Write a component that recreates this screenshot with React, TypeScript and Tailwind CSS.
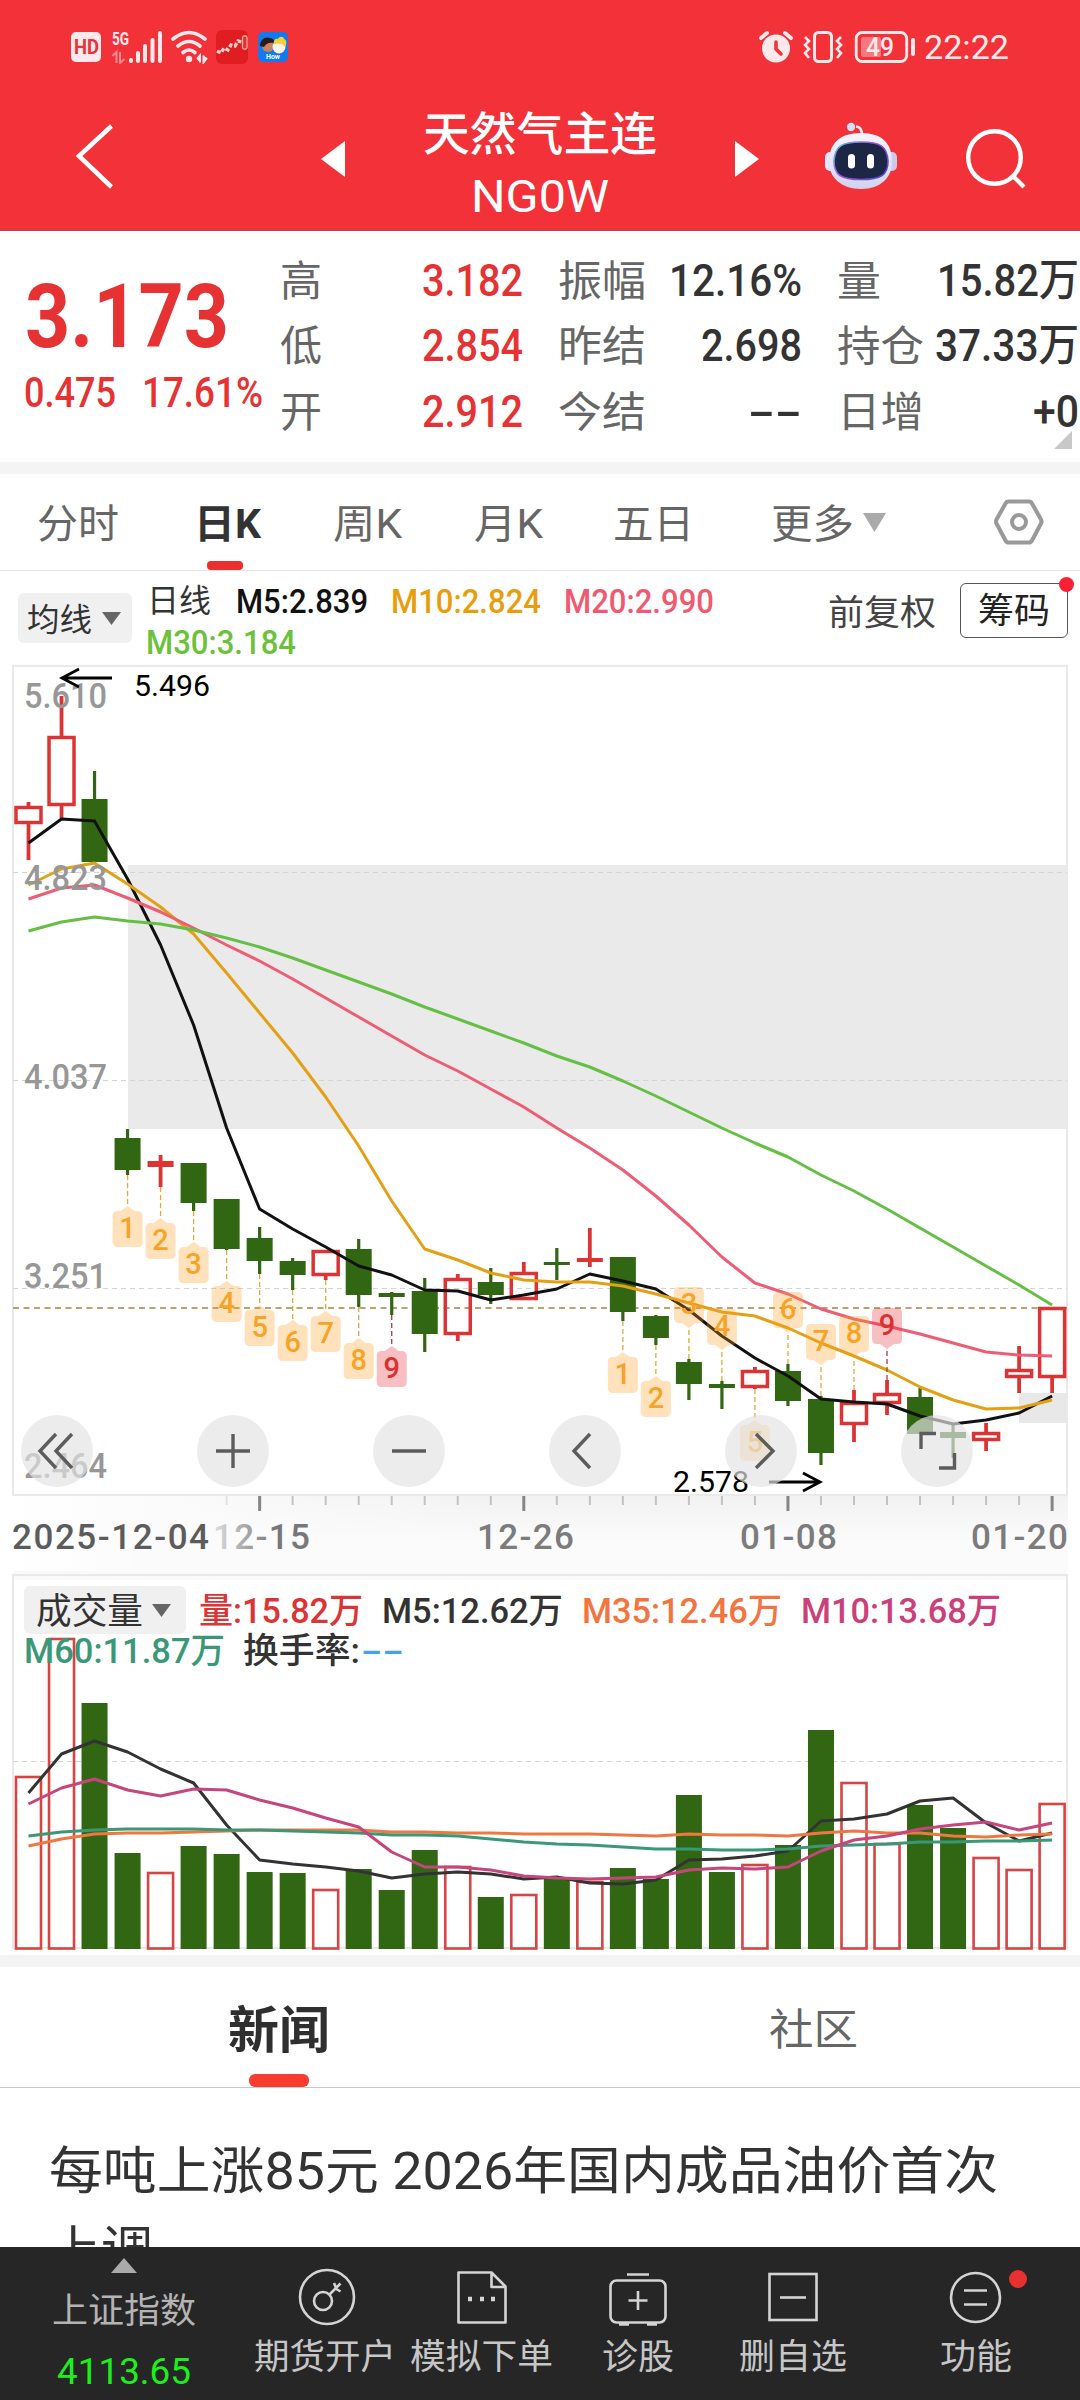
import { useLayoutEffect, useRef, type ReactNode } from 'react';

/* Text stretched horizontally so that it fills the width of its box. */
function Fit({ box, children }: { box: string; children: ReactNode }) {
  const outer = useRef<HTMLSpanElement>(null);
  const inner = useRef<HTMLSpanElement>(null);
  useLayoutEffect(() => {
    const o = outer.current;
    const i = inner.current;
    if (o && i && i.offsetWidth > 0) {
      i.style.transform = `scaleX(${o.clientWidth / i.getBoundingClientRect().width})`;
    }
  }, []);
  return (
    <span ref={outer} className={`block flex-none whitespace-nowrap ${box}`}>
      <span ref={inner} className="inline-block origin-left">
        {children}
      </span>
    </span>
  );
}

const X0 = 28.5;
const STEP = 33.02;
const cx = (i: number) => X0 + i * STEP;
const line = (ys: number[]) => ys.map((y, i) => `${cx(i).toFixed(1)},${y}`).join(' ');

const GREEN = '#316713';
const RED = '#dc3434';

type Candle = ['r' | 'g', number, number, number, number];

/* direction, high, body top, body bottom, low */
const candles: Candle[] = [
  ['r', 802, 806, 824, 860],
  ['r', 696, 736, 806, 818],
  ['g', 771, 799, 862, 862],
  ['g', 1129, 1138, 1170, 1175],
  ['r', 1155, 1161, 1167, 1187],
  ['g', 1163, 1163, 1203, 1211],
  ['g', 1199, 1199, 1249, 1250],
  ['g', 1227, 1238, 1261, 1274],
  ['g', 1258, 1261, 1275, 1290],
  ['r', 1250, 1250, 1276, 1280],
  ['g', 1239, 1249, 1295, 1307],
  ['g', 1292, 1293, 1297, 1315],
  ['g', 1278, 1291, 1334, 1352],
  ['r', 1274, 1278, 1335, 1341],
  ['g', 1268, 1282, 1295, 1304],
  ['r', 1262, 1272, 1300, 1300],
  ['g', 1248, 1262, 1265, 1280],
  ['r', 1228, 1258, 1262, 1267],
  ['g', 1257, 1257, 1312, 1321],
  ['g', 1315, 1316, 1338, 1345],
  ['g', 1359, 1362, 1384, 1400],
  ['g', 1381, 1384, 1388, 1409],
  ['r', 1367, 1370, 1388, 1389],
  ['g', 1364, 1371, 1401, 1406],
  ['g', 1396, 1399, 1453, 1465],
  ['r', 1390, 1402, 1425, 1442],
  ['r', 1380, 1393, 1404, 1415],
  ['g', 1388, 1397, 1434, 1434],
  ['g', 1424, 1432, 1438, 1458],
  ['r', 1423, 1432, 1441, 1451],
  ['r', 1346, 1369, 1378, 1393],
  ['r', 1307, 1307, 1378, 1393],
];

const ma5 = [843, 819, 821, 879, 945, 1025, 1128, 1209, 1229, 1247, 1266, 1275, 1290, 1291, 1300, 1295, 1289, 1274, 1281, 1289, 1310, 1336, 1358, 1376, 1399, 1402, 1404, 1416, 1424, 1420, 1413, 1396];
const ma10 = [885, 869, 863, 884, 907, 934, 973, 1013, 1053, 1097, 1146, 1201, 1249, 1260, 1273, 1280, 1282, 1282, 1286, 1294, 1303, 1312, 1316, 1328, 1343, 1356, 1370, 1387, 1400, 1409, 1408, 1400];
const ma20 = [899, 888, 885, 898, 912, 928, 945, 961, 979, 998, 1017, 1036, 1055, 1071, 1089, 1107, 1128, 1148, 1170, 1196, 1225, 1257, 1283, 1294, 1309, 1319, 1326, 1334, 1343, 1352, 1355, 1356];
const ma30 = [931, 922, 917, 921, 924, 930, 938, 947, 958, 970, 982, 994, 1007, 1019, 1031, 1043, 1056, 1067, 1081, 1096, 1112, 1128, 1143, 1157, 1175, 1191, 1209, 1228, 1247, 1266, 1285, 1305];

/* candle index, count, y of the pointer's tip, placed under the candle */
const marks: [number, number, number, boolean][] = [
  [3, 1, 1206, true],
  [4, 2, 1218, true],
  [5, 3, 1242, true],
  [6, 4, 1281, true],
  [7, 5, 1305, true],
  [8, 6, 1320, true],
  [9, 7, 1311, true],
  [10, 8, 1338, true],
  [11, 9, 1346, true],
  [18, 1, 1352, true],
  [19, 2, 1376, true],
  [20, 3, 1328, false],
  [21, 4, 1350, false],
  [22, 5, 1420, true],
  [23, 6, 1333, false],
  [24, 7, 1365, false],
  [25, 8, 1357, false],
  [26, 9, 1349, false],
];

const volTops = [1777, 1639, 1703, 1853, 1873, 1846, 1854, 1872, 1873, 1890, 1869, 1890, 1850, 1867, 1897, 1895, 1879, 1882, 1868, 1879, 1795, 1872, 1865, 1845, 1730, 1783, 1844, 1805, 1828, 1858, 1870, 1804];
const v5 = [1793, 1754, 1741, 1752, 1769, 1783, 1825, 1860, 1864, 1867, 1871, 1878, 1874, 1872, 1874, 1879, 1877, 1883, 1884, 1880, 1860, 1859, 1856, 1851, 1821, 1819, 1814, 1801, 1798, 1823, 1841, 1833];
const v10 = [1804, 1788, 1779, 1790, 1796, 1789, 1790, 1800, 1808, 1818, 1827, 1852, 1867, 1867, 1870, 1876, 1878, 1879, 1878, 1877, 1870, 1868, 1869, 1867, 1851, 1840, 1836, 1829, 1825, 1822, 1830, 1823];
const v35 = [1846, 1839, 1834, 1833, 1833, 1832, 1831, 1830, 1830, 1830, 1830, 1832, 1832, 1833, 1833, 1834, 1834, 1834, 1835, 1836, 1834, 1835, 1835, 1836, 1833, 1831, 1833, 1833, 1836, 1837, 1835, 1834];
const v60 = [1836, 1832, 1830, 1829, 1829, 1829, 1830, 1830, 1831, 1832, 1833, 1835, 1835, 1836, 1839, 1842, 1844, 1845, 1847, 1849, 1849, 1850, 1850, 1849, 1846, 1845, 1844, 1842, 1842, 1841, 1841, 1840];

function StatusBar() {
  return (
    <div className="flex h-[94px] items-center text-[#ffe9ea]">
      <div className="ml-[71px] flex h-[30px] w-[30px] items-center justify-center rounded-[5px] bg-[#ffe9ea]">
        <Fit box="w-[25px] text-[20px] font-bold leading-[28px] text-[#e8333b]">HD</Fit>
      </div>
      <svg className="ml-[10px]" width="52" height="34" viewBox="111 29 52 34">
        <text x="112" y="44" fontSize="19" fontWeight="700" textLength="17" lengthAdjust="spacingAndGlyphs" fill="#ffe9ea">5G</text>
        <path d="M112.500 55l4-4v11M120 51v11l4.500-4" stroke="#f68a8f" strokeWidth="2" fill="none" />
        <path d="M131 59v1M138 52v8M145 45v15M152.500 39v21M160 32v28" stroke="#ffe9ea" strokeWidth="4" strokeLinecap="round" />
      </svg>
      <svg className="ml-[7px]" width="40" height="34" viewBox="170 29 40 34">
        <g fill="none" stroke="#ffe9ea" strokeWidth="3.600" strokeLinecap="round">
          <path d="M173 38q16-13 32 0" />
          <path d="M178 45q11-9 22 0" />
          <path d="M183 51.500q6-5 12 0" />
        </g>
        <circle cx="189" cy="58" r="3.200" fill="#ffe9ea" />
        <path d="M197 58l3-3.500v7M203.500 54.500v7l3.500-4.500" stroke="#ffe9ea" strokeWidth="2" fill="#ffe9ea" />
      </svg>
      <svg className="ml-[5px]" width="34" height="34" viewBox="0 0 34 34">
        <rect x="1" y="0" width="32" height="34" rx="6" fill="#e01d20" />
        <path d="M2 21l4 2 3-5 4 2 3-5 4 1 3-5 4 1" fill="none" stroke="#f7d0cc" strokeWidth="3.400" strokeDasharray="4 2" />
        <rect x="27.500" y="6" width="4.500" height="13" rx="1.500" fill="#d33" stroke="#f3a79c" strokeWidth="1.300" />
      </svg>
      <svg className="ml-[9px]" width="30" height="30" viewBox="0 0 30 30">
        <rect width="30" height="30" rx="5" fill="#1279ee" />
        <circle cx="10" cy="14" r="6" fill="#c98462" />
        <path d="M2 14c0-7 6-10 10-8 3 0 5 3 4 5-4-1-8 0-10 4z" fill="#2a1a1c" />
        <circle cx="21" cy="15" r="6.500" fill="#fdf3e6" />
        <path d="M16 12c-1-4 2-6 4-5 1-3 6-3 6 0 3 1 3 5 1 8-2-4-6-4-11-3z" fill="#f4cf3c" />
        <text x="8" y="27" fontSize="7" fontWeight="700" fill="#fff" textLength="14">How</text>
      </svg>
      <svg className="ml-[471px]" width="34" height="34" viewBox="759 29 34 34">
        <circle cx="776" cy="47.500" r="14" fill="#ffe9ea" />
        <path d="M761 37l6-5M791 37l-6-5" stroke="#ffe9ea" strokeWidth="4" strokeLinecap="round" />
        <path d="M776 41v7l5 5" stroke="#f03239" strokeWidth="3.500" strokeLinecap="round" fill="none" />
      </svg>
      <svg className="ml-[9px]" width="42" height="34" viewBox="802 29 42 34">
        <g fill="none" stroke="#ffe9ea" strokeWidth="3">
          <rect x="814.500" y="31.500" width="17" height="29" rx="4" />
          <path d="M805 36l4 4-4 4 4 4-4 4 4 5" strokeWidth="2.600" />
          <path d="M841 36l-4 4 4 4-4 4 4 4-4 5" strokeWidth="2.600" />
        </g>
      </svg>
      <svg className="ml-[10px]" width="62" height="34" viewBox="854 29 62 34">
        <rect x="856.200" y="31.500" width="50.500" height="29" rx="6" fill="none" stroke="#ffe9ea" strokeWidth="2.800" />
        <rect x="861" y="36" width="20" height="20" rx="2" fill="#f7797f" />
        <path d="M913 39v14" stroke="#ffe9ea" strokeWidth="4" strokeLinecap="round" />
        <text x="866" y="54.500" fontSize="25" fontWeight="500" fill="#ffe9ea" textLength="28" lengthAdjust="spacingAndGlyphs">49</text>
      </svg>
      <Fit box="ml-[8px] w-[85px] text-[34px] leading-[40px]">22:22</Fit>
    </div>
  );
}

function NavBar() {
  return (
    <div className="flex h-[137px] items-start border-b border-[#b34a50]">
      <svg className="ml-[72px] mt-[26px]" width="44" height="72" viewBox="72 120 44 72">
        <path d="M111.500 126L79 156l32.500 31" fill="none" stroke="#fff" strokeWidth="4.500" />
      </svg>
      <svg className="ml-[205px] mt-[47px]" width="24" height="36" viewBox="0 0 24 36">
        <path d="M24 0v36L0 18z" fill="#fff" />
      </svg>
      <div className="ml-[78px] flex w-[234px] flex-col items-center">
        <Fit box="mt-[10px] w-[234px] text-[46px] font-medium leading-[60px]">天然气主连</Fit>
        <Fit box="mt-[3px] w-[138px] text-[44px] leading-[60px]">NG0W</Fit>
      </div>
      <svg className="ml-[78px] mt-[47px]" width="24" height="36" viewBox="0 0 24 36">
        <path d="M0 0v36l24-18z" fill="#fff" />
      </svg>
      <svg className="ml-[64px] mt-[26px]" width="76" height="72" viewBox="823 120 76 72">
        <defs>
          <linearGradient id="shell" x1="0" y1="0" x2="0" y2="1">
            <stop offset="0" stopColor="#f6f5fd" />
            <stop offset="0.600" stopColor="#e3e3f8" />
            <stop offset="1" stopColor="#d0d2ee" />
          </linearGradient>
          <linearGradient id="rim" x1="0" y1="0" x2="1" y2="0.700">
            <stop offset="0" stopColor="#56c5ea" />
            <stop offset="0.500" stopColor="#a54fe0" />
            <stop offset="1" stopColor="#5a48c9" />
          </linearGradient>
        </defs>
        <path d="M862 135q0-8-6-8.500" fill="none" stroke="#ecebfa" strokeWidth="2.600" />
        <circle cx="851" cy="127" r="4.200" fill="#dcdcf4" />
        <rect x="825" y="152" width="12" height="19" rx="5" fill="#e5e5f9" />
        <rect x="885" y="152" width="12" height="19" rx="5" fill="#c9cbea" />
        <path d="M861 133c22 0 31 11 31 29 0 15-11 27-31 27s-32-12-32-27c0-18 10-29 32-29z" fill="url(#shell)" />
        <path d="M861 142c19 0 26 4 27 19 0 14-7 18.500-27 18.500S834 175 834 161c1-15 8-19 27-19z" fill="#1b2744" stroke="url(#rim)" strokeWidth="1.600" />
        <rect x="848" y="154" width="7" height="14.500" rx="3.500" fill="#fff" />
        <rect x="867" y="154" width="7" height="14.500" rx="3.500" fill="#fff" />
      </svg>
      <svg className="ml-[65px] mt-[30px]" width="64" height="66" viewBox="964 124 64 66">
        <circle cx="994.500" cy="157.500" r="26.300" fill="none" stroke="#fff" strokeWidth="4.400" />
        <path d="M1012.500 175.500l11.500 11.500" stroke="#fff" strokeWidth="4.400" />
      </svg>
    </div>
  );
}

function Label({ w, children }: { w: string; children: string }) {
  return <Fit box={`${w} ml-[-1px] mt-[2px] text-[42px] leading-[64px] text-[#666]`}>{children}</Fit>;
}

function Value({ w, children }: { w: string; children: string }) {
  return <Fit box={`${w} text-[44px] font-medium leading-[64px]`}>{children}</Fit>;
}

function Quote() {
  const row = 'flex h-[65.500px] items-center justify-between';
  return (
    <section className="relative flex h-[231px] overflow-hidden bg-white pt-[17px]">
      <div className="w-[281px] flex-none text-[#e63232]">
        <Fit box="ml-[25px] mt-[17px] w-[204px] text-[89px] font-bold leading-[104px]">3.173</Fit>
        <div className="flex">
          <Fit box="ml-[24px] mt-[-1px] w-[92px] text-[42px] font-medium leading-[50px]">0.475</Fit>
          <Fit box="ml-[26px] mt-[-1px] w-[121px] text-[42px] font-medium leading-[50px]">17.61%</Fit>
        </div>
      </div>
      <div className="w-[242px] flex-none text-[#e63232]">
        <div className={row}><Label w="w-[42px]">高</Label><Value w="w-[101px]">3.182</Value></div>
        <div className={row}><Label w="w-[42px]">低</Label><Value w="w-[101px]">2.854</Value></div>
        <div className={row}><Label w="w-[42px]">开</Label><Value w="w-[101px]">2.912</Value></div>
      </div>
      <div className="ml-[36px] w-[243px] flex-none text-[#333]">
        <div className={row}><Label w="w-[88px]">振幅</Label><Value w="w-[133px]">12.16%</Value></div>
        <div className={row}><Label w="w-[88px]">昨结</Label><Value w="w-[101px]">2.698</Value></div>
        <div className={row}><Label w="w-[88px]">今结</Label><Value w="w-[54px]">--</Value></div>
      </div>
      <div className="ml-[36px] w-[241px] flex-none text-[#333]">
        <div className={row}><Label w="w-[44px]">量</Label><Value w="w-[142px]">15.82万</Value></div>
        <div className={row}><Label w="w-[87px]">持仓</Label><Value w="w-[144px]">37.33万</Value></div>
        <div className={row}><Label w="w-[87px]">日增</Label><Value w="w-[46px]">+0</Value></div>
      </div>
      <svg className="absolute right-[8px] top-[200px]" width="18" height="18" viewBox="0 0 18 18">
        <path d="M18 0v18H0z" fill="#c8c8c8" />
      </svg>
    </section>
  );
}

function PeriodTabs() {
  const t = 'text-[40px] leading-[60px]';
  return (
    <nav className="flex h-[97px] items-start border-b border-[#e6e6e6] bg-white pt-[21px] text-[#666]">
      <Fit box={`ml-[37px] w-[82px] ${t}`}>分时</Fit>
      <div className="ml-[75px] flex w-[67px] flex-col items-center font-bold text-[#333]">
        <Fit box={`w-[67px] ${t}`}>日K</Fit>
        <div className="mr-[5px] mt-[6px] h-[9px] w-[36px] rounded-[4px] bg-[#e83030]" />
      </div>
      <Fit box={`ml-[72px] w-[69px] ${t}`}>周K</Fit>
      <Fit box={`ml-[72px] w-[69px] ${t}`}>月K</Fit>
      <Fit box={`ml-[70px] w-[81px] ${t}`}>五日</Fit>
      <Fit box={`ml-[77px] w-[83px] ${t}`}>更多</Fit>
      <svg className="ml-[9px] mt-[18px]" width="23" height="19" viewBox="0 0 23 19"><path d="M0 0h23L11.500 19z" fill="#aaa" /></svg>
      <svg className="ml-[107px] mt-[3px]" width="52" height="48" viewBox="994 498 52 48" fill="none" stroke="#999" strokeWidth="4">
        <path d="M1009.500 501.500h20.500q2 0 3 2l9 16q1 2 0 4l-9 17q-1 2-3 2h-20.500q-2 0-3-2l-9-17q-1-2 0-4l9-16q1-2 3-2z" />
        <circle cx="1020" cy="522" r="7" />
      </svg>
    </nav>
  );
}

function MaLegend() {
  const t = 'text-[34px] font-medium leading-[41px]';
  return (
    <div className="relative flex h-[89px] items-start bg-white">
      <div className="ml-[18px] mt-[22px] flex h-[50px] w-[114px] items-center rounded-[6px] bg-[#f0f0f0] pl-[9px] text-[#333]">
        <Fit box="mt-[3px] w-[65px] text-[32px] leading-[44px]">均线</Fit>
        <svg className="ml-[10px]" width="19" height="13" viewBox="0 0 19 13"><path d="M0 0h19L9.500 13z" fill="#666" /></svg>
      </div>
      <div className="ml-[15px] mt-[10px] w-[600px]">
        <div className="flex">
          <Fit box={`w-[64px] text-[32px] leading-[41px] text-[#333]`}>日线</Fit>
          <Fit box={`ml-[25px] w-[132px] text-[#111] ${t}`}>M5:2.839</Fit>
          <Fit box={`ml-[23px] w-[150px] text-[#e99d0c] ${t}`}>M10:2.824</Fit>
          <Fit box={`ml-[23px] w-[150px] text-[#f0596f] ${t}`}>M20:2.990</Fit>
        </div>
        <Fit box={`ml-[-1px] w-[150px] text-[#6cc13c] ${t}`}>M30:3.184</Fit>
      </div>
      <Fit box="ml-[81px] mt-[19px] w-[108px] text-[35px] leading-[48px] text-[#444]">前复权</Fit>
      <div className="relative ml-[24px] mt-[12px] flex h-[55px] w-[108px] items-center justify-center rounded-[6px] border-[1.500px] border-[#555] text-[#222]">
        <Fit box="mt-[3px] w-[72px] text-[35px] leading-[48px]">筹码</Fit>
        <div className="absolute -right-[7px] -top-[7px] h-[15px] w-[15px] rounded-full bg-[#ff2133]" />
      </div>
    </div>
  );
}

function Mark({ i, n, tip, below }: { i: number; n: number; tip: number; below: boolean }) {
  const x = cx(i);
  const red = n === 9;
  const c = candles[i];
  const d = below ? 1 : -1;
  return (
    <g>
      <path d={`M${x} ${below ? c[4] : c[1]}V${tip}`} stroke={red ? '#b03a3a' : '#e0aa3c'} strokeWidth="1.300" strokeDasharray="5 3" />
      <path
        d={`M${x} ${tip}l7 ${5 * d}h3q5 0 5 ${5 * d}v${26 * d}q0 ${5 * d} -5 ${5 * d}h-20q-5 0 -5 ${-5 * d}v${-26 * d}q0 ${-5 * d} 5 ${-5 * d}h3z`}
        fill={red ? 'rgba(230,56,62,0.320)' : 'rgba(255,160,30,0.300)'}
      />
      <text x={x} y={below ? tip + 32 : tip - 14} textAnchor="middle" fontSize="29" fontWeight="500" fill={red ? '#dc3030' : '#f7a326'}>
        {n}
      </text>
    </g>
  );
}

function PriceChart() {
  return (
    <svg className="block" width="1080" height="911" viewBox="0 660 1080 911">
      <defs>
        <linearGradient id="axisBg" x1="0" y1="0" x2="1" y2="0">
          <stop offset="0" stopColor="#fff" />
          <stop offset="0.450" stopColor="#f2f2f2" />
          <stop offset="1" stopColor="#f2f2f2" />
        </linearGradient>
        <linearGradient id="axisFade" x1="0" y1="0" x2="0" y2="1">
          <stop offset="0" stopColor="#fbfbfb" stopOpacity="0" />
          <stop offset="0.600" stopColor="#fbfbfb" />
        </linearGradient>
        <linearGradient id="dateFade" x1="214" y1="0" x2="275" y2="0" gradientUnits="userSpaceOnUse">
          <stop offset="0" stopColor="#ddd" />
          <stop offset="1" stopColor="#777" />
        </linearGradient>
      </defs>
      <rect x="13" y="1496" width="1055" height="75" fill="url(#axisBg)" />
      <rect x="130" y="1496" width="938" height="75" fill="url(#axisFade)" />
      <rect x="128" y="865" width="939" height="264" fill="#eaeaea" />
      <rect x="1019" y="1393" width="48" height="30" fill="#e8e8e8" />
      <rect x="13" y="666" width="1054" height="829" fill="none" stroke="#e9e9e9" strokeWidth="2" />
      <path d="M13 872.500H1067M13 1080.500H1067M13 1288.500H1067" stroke="#d4d4d4" strokeWidth="1.200" strokeDasharray="5 4" />
      <path d="M13 1308H1067" stroke="#b9a36e" strokeWidth="2" strokeDasharray="6 4.500" />

      {candles.map(([k, h, t, b, l], i) => {
        const x = cx(i);
        const color = k === 'g' ? GREEN : RED;
        const solid = k === 'g' || b - t < 7;
        return (
          <g key={i}>
            <path d={`M${x} ${h}V${t}M${x} ${b}V${l}`} stroke={color} strokeWidth={k === 'g' ? 3.2 : 3.8} />
            {solid ? (
              <rect x={x - 13} y={t} width="26" height={b - t} fill={color} />
            ) : (
              <rect x={x - 12.5} y={t + 1.5} width="25" height={b - t - 3} fill="none" stroke={color} strokeWidth="3.500" />
            )}
          </g>
        );
      })}

      <g fill="none" strokeWidth="3" strokeLinejoin="round">
        <polyline points={line(ma5)} stroke="#111" />
        <polyline points={line(ma10)} stroke="#e3a014" />
        <polyline points={line(ma20)} stroke="#ee5d74" />
        <polyline points={line(ma30)} stroke="#66bf45" />
      </g>

      {marks.map(([i, n, tip, below]) => (
        <Mark key={i} i={i} n={n} tip={tip} below={below} />
      ))}

      <g fontSize="35" fontWeight="500" fill="#979797">
        <text x="24" y="708" textLength="83" lengthAdjust="spacingAndGlyphs">5.610</text>
        <text x="24" y="890" textLength="83" lengthAdjust="spacingAndGlyphs">4.823</text>
        <text x="24" y="1089" textLength="83" lengthAdjust="spacingAndGlyphs">4.037</text>
        <text x="24" y="1288" textLength="83" lengthAdjust="spacingAndGlyphs">3.251</text>
        <text x="24" y="1478" textLength="83" lengthAdjust="spacingAndGlyphs">2.464</text>
      </g>

      <g stroke="#000" strokeWidth="2.800" fill="none">
        <path d="M112 678H62M79 669l-17 9 17 9" />
        <path d="M769 1482h51M803 1473l17 9-17 9" />
      </g>
      <g fontSize="29.500" fill="#000">
        <text x="134" y="696" textLength="76" lengthAdjust="spacingAndGlyphs">5.496</text>
        <text x="673" y="1492" textLength="76" lengthAdjust="spacingAndGlyphs">2.578</text>
      </g>

      {candles.map((_, i) => {
        if (i < 6) return null;
        const major = i % 8 === 7;
        return (
          <path
            key={i}
            d={`M${cx(i)} 1496v${major ? 15 : 9}`}
            stroke={major ? '#858585' : i === 6 ? '#e2e2e2' : '#c2c2c2'}
            strokeWidth={major ? 3 : 2}
          />
        );
      })}
      <g fontSize="35" fontWeight="500" fill="#7c7c7c">
        <text x="12" y="1549" fill="#5c5c5c" textLength="197">2025-12-04</text>
        <text x="213" y="1549" fill="url(#dateFade)" textLength="97">12-15</text>
        <text x="477" y="1549" textLength="97">12-26</text>
        <text x="740" y="1549" textLength="97">01-08</text>
        <text x="971" y="1549" textLength="97">01-20</text>
      </g>
    </svg>
  );
}

/* Strokes of the floating buttons, drawn on a 72 x 72 circle. */
const controls = [
  'M35 19L19 36l16 17M51 19L35 36l16 17',
  'M36 19v34M19 36h34',
  'M19 36h34',
  'M41 19L25 36l16 17',
  'M31 19l17 17-17 17',
  'M20 34V18.500h15M38 53h15.500V38',
];

function ChartControls() {
  return (
    <div className="absolute left-[21px] top-[755px] flex gap-[104px]">
      {controls.map((d) => (
        <button key={d} className="flex h-[72px] w-[72px] items-center justify-center rounded-full bg-[rgba(227,227,227,0.680)]">
          <svg width="72" height="72" viewBox="0 0 72 72">
            <path d={d} fill="none" stroke="#5c5c5c" strokeWidth="3.400" />
          </svg>
        </button>
      ))}
    </div>
  );
}

function VolumeChart() {
  const t = 'text-[35px] font-medium leading-[41px]';
  return (
    <section className="relative h-[384px] bg-white">
      <svg className="block" width="1080" height="384" viewBox="0 1571 1080 384">
        <rect x="13" y="1571" width="1054" height="9" fill="#fafafa" />
        <rect x="13" y="1575" width="1054" height="373" fill="none" stroke="#e9e9e9" strokeWidth="2" />
        <path d="M13 1761.500H1067" stroke="#d4d4d4" strokeWidth="1.200" strokeDasharray="5 4" />
        {volTops.map((y, i) =>
          candles[i][0] === 'g' ? (
            <rect key={i} x={cx(i) - 13} y={y} width="26" height={1949 - y} fill={GREEN} />
          ) : (
            <rect key={i} x={cx(i) - 12.5} y={y} width="25" height={1948.5 - y} fill="none" stroke="#d64444" strokeWidth="2.600" />
          ),
        )}
        <g fill="none" strokeWidth="3" strokeLinejoin="round">
          <polyline points={line(v5)} stroke="#333" />
          <polyline points={line(v35)} stroke="#ee7844" />
          <polyline points={line(v60)} stroke="#3a9876" />
          <polyline points={line(v10)} stroke="#c6457d" />
        </g>
      </svg>
      <div className="absolute left-[24px] top-[15px]">
        <div className="flex items-center">
          <div className="flex h-[48px] w-[162px] items-center rounded-[6px] bg-[#f0f0f0] pl-[12px] text-[#333]">
            <Fit box="mt-[3px] w-[107px] text-[36px] leading-[48px]">成交量</Fit>
            <svg className="ml-[9px]" width="19" height="13" viewBox="0 0 19 13"><path d="M0 0h19L9.500 13z" fill="#666" /></svg>
          </div>
          <Fit box={`ml-[13px] mt-[3px] w-[164px] text-[#dc3434] ${t}`}>量:15.82万</Fit>
          <Fit box={`ml-[19px] mt-[3px] w-[181px] text-[#333] ${t}`}>M5:12.62万</Fit>
          <Fit box={`ml-[19px] mt-[3px] w-[200px] text-[#f47440] ${t}`}>M35:12.46万</Fit>
          <Fit box={`ml-[19px] mt-[3px] w-[200px] text-[#cb407a] ${t}`}>M10:13.68万</Fit>
        </div>
        <div className="mt-[-3px] flex">
          <Fit box={`w-[201px] text-[#3a9878] ${t}`}>M60:11.87万</Fit>
          <Fit box={`ml-[18px] w-[117px] text-[#333] ${t}`}>换手率:</Fit>
          <Fit box={`ml-[1px] w-[43px] text-[#45a5e0] ${t}`}>--</Fit>
        </div>
      </div>
    </section>
  );
}

function News() {
  return (
    <section className="h-[280px] overflow-hidden bg-white">
      <div className="flex h-[121px] border-b border-[#c8c8c8]">
        <div className="ml-[228px] flex w-[102px] flex-col items-center pt-[27px] text-[#2f2f2f]">
          <Fit box="w-[102px] text-[50px] font-bold leading-[74px]">新闻</Fit>
          <div className="mt-[6px] h-[13px] w-[60px] rounded-[6px] bg-[#f93c30]" />
        </div>
        <Fit box="ml-[439px] mt-[26px] w-[89px] text-[43px] leading-[74px] text-[#666]">社区</Fit>
      </div>
      <div className="mt-[44px] text-[51px] leading-[79px] text-[#333]">
        <Fit box="ml-[49px] w-[949px]">每吨上涨85元 2026年国内成品油价首次</Fit>
        <Fit box="ml-[49px] w-[104px]">上调</Fit>
      </div>
    </section>
  );
}

function BottomBar() {
  const t = 'text-[35px] leading-[50px]';
  return (
    <footer className="flex h-[153px] bg-[#262626] text-[#c6c6c6]">
      <div className="flex w-[247px] flex-none flex-col pt-[11px]">
        <svg className="ml-[111px]" width="26" height="15" viewBox="0 0 26 15"><path d="M13 0l13 15H0z" fill="#aaa" /></svg>
        <Fit box={`ml-[52px] mt-[14px] w-[144px] text-[#b4b4b4] ${t}`}>上证指数</Fit>
        <Fit box={`ml-[57px] mt-[10px] w-[134px] text-[#1cf01c] text-[36px] leading-[50px]`}>4113.65</Fit>
      </div>
      <div className="ml-[7px] flex w-[142px] flex-none flex-col items-center pt-[20px]">
        <svg className="ml-[3px]" width="60" height="60" viewBox="296 2267 60 60" fill="none" stroke="#d4d4d4" strokeWidth="2.600">
          <circle cx="326" cy="2297" r="27" />
          <circle cx="322" cy="2301" r="9" />
          <path d="M328.500 2294.500l11-11M334.500 2288.500l5 3M333 2283l2 5" />
        </svg>
        <Fit box={`mt-[6px] w-[142px] ${t}`}>期货开户</Fit>
      </div>
      <div className="ml-[14px] flex w-[143px] flex-none flex-col items-center pt-[20px]">
        <svg width="60" height="60" viewBox="452 2267 60 60" fill="none" stroke="#d4d4d4" strokeWidth="2.600">
          <path d="M458.500 2272.500h33l14 14v36h-47zM491.500 2273v14h14" strokeLinejoin="round" />
          <path d="M468 2299h4M480 2299h4M491 2299h4" strokeWidth="4.500" />
        </svg>
        <Fit box={`mt-[6px] w-[143px] ${t}`}>模拟下单</Fit>
      </div>
      <div className="ml-[49px] flex w-[72px] flex-none flex-col items-center pt-[20px]">
        <svg width="60" height="60" viewBox="607 2267 60 60" fill="none" stroke="#d4d4d4" strokeWidth="2.600">
          <rect x="609.500" y="2280.500" width="55" height="42" rx="6" />
          <path d="M626 2274.500h22M637 2291v19M627.500 2300.500h19" />
          <path d="M618 2324h10M646 2324h10" strokeWidth="3.500" />
        </svg>
        <Fit box={`mt-[6px] w-[72px] ${t}`}>诊股</Fit>
      </div>
      <div className="ml-[65px] flex w-[108px] flex-none flex-col items-center pt-[20px]">
        <svg width="60" height="60" viewBox="763 2267 60 60" fill="none" stroke="#d4d4d4" strokeWidth="2.600">
          <rect x="769.500" y="2274" width="47" height="46" />
          <path d="M780 2297.500h26" />
        </svg>
        <Fit box={`mt-[6px] w-[108px] ${t}`}>删自选</Fit>
      </div>
      <div className="relative ml-[93px] flex w-[72px] flex-none flex-col items-center pt-[20px]">
        <svg width="60" height="60" viewBox="946 2267 60 60" fill="none" stroke="#d4d4d4" strokeWidth="2.600">
          <circle cx="975.500" cy="2297.500" r="24.500" />
          <path d="M964 2290.500h23M964 2304.500h23" />
        </svg>
        <div className="absolute left-[69px] top-[23px] h-[18px] w-[18px] rounded-full bg-[#e8312f]" />
        <Fit box={`mt-[6px] w-[72px] ${t}`}>功能</Fit>
      </div>
    </footer>
  );
}

export default function App() {
  return (
    <div className="flex h-[2400px] w-[1080px] flex-col overflow-hidden bg-white font-['Roboto','Noto_Sans_CJK_SC',sans-serif]">
      <header className="h-[231px] flex-none bg-[#f23138] text-white">
        <StatusBar />
        <NavBar />
      </header>
      <Quote />
      <div className="h-[12px] flex-none bg-[#f4f4f4]" />
      <PeriodTabs />
      <MaLegend />
      <div className="relative h-[911px] flex-none">
        <PriceChart />
        <ChartControls />
      </div>
      <VolumeChart />
      <div className="h-[12px] flex-none bg-[#f4f4f4]" />
      <News />
      <BottomBar />
    </div>
  );
}
